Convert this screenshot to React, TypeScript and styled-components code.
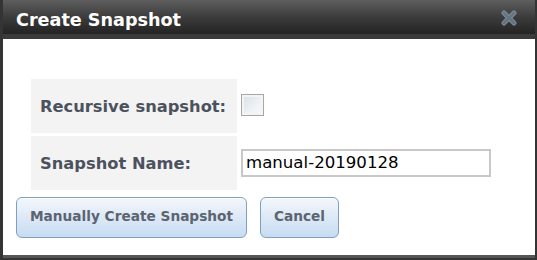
import * as React from 'react';
import styled, { createGlobalStyle } from 'styled-components';

const GlobalStyle = createGlobalStyle`
  html, body {
    margin: 0;
    padding: 0;
    background: #ffffff;
  }
  body {
    font-family: "DejaVu Sans", Verdana, sans-serif;
  }
`;

const DivDialog = styled.div`
  width: 537px;
  height: 260px;
  box-sizing: border-box;
  display: flex;
  flex-direction: column;
  border-left: 3px solid #343434;
  border-right: 2px solid #343434;
  border-bottom: 2px solid #343434;
  box-shadow: inset 0 -3px 0 #555555;
  background: #555555;
`;

const DivTitleBar = styled.div`
  flex: 0 0 34px;
  display: flex;
  flex-direction: row;
  align-items: center;
  padding: 0 18px 0 13px;
  background: linear-gradient(to bottom, #5e5e5e 0%, #3c3c3c 50%, #232323 100%);
  border-bottom: 5px solid #3a3a3a;
`;

const DivTitle = styled.div`
  flex: 1 1 0;
  color: #ffffff;
  font-weight: bold;
  font-size: 17.6px;
  padding-top: 6px;
`;

const DivClose = styled.div`
  width: 16px;
  height: 16px;
  display: flex;
  margin-top: 2px;
  opacity: 0.8;
`;

const DivBody = styled.div`
  flex: 0 0 216px;
  background: #ffffff;
  padding: 40px 0 0 13px;
  box-sizing: border-box;
  display: flex;
  flex-direction: column;
`;

const DivForm = styled.div`
  display: grid;
  grid-template-columns: 206px auto;
  row-gap: 3px;
  margin-left: 15px;
`;

const DivLabel = styled.div`
  height: 54px;
  background: #f3f3f3;
  display: flex;
  align-items: center;
  padding-left: 9px;
  color: #4c525d;
  font-weight: bold;
  font-size: 16.3px;
`;

const DivValue = styled.div`
  display: flex;
  align-items: center;
  padding-left: 4px;
`;

const InputCheck = styled.input`
  appearance: none;
  width: 23px;
  height: 22px;
  margin: 0 0 2px 0;
  border: 1px solid #a7a7a7;
  background: linear-gradient(to bottom right, #d8dfe7 0%, #eef2f6 60%, #f8f9fb 100%);
  box-shadow: inset 0 0 0 2px #f4f4f4;
`;

const InputText = styled.input`
  width: 250px;
  height: 28px;
  box-sizing: border-box;
  margin: 0 0 1px 0;
  border: 2px solid #c8c8c8;
  padding: 0 0 0 3px;
  font-family: "DejaVu Sans", Verdana, sans-serif;
  font-size: 16.6px;
  color: #000000;
  outline: none;
`;

const DivButtons = styled.div`
  display: flex;
  flex-direction: row;
  gap: 13px;
  margin-top: 7px;
`;

const Button = styled.button<{ $width: number }>`
  width: ${props => props.$width}px;
  height: 41px;
  border: 1px solid #7f9fbd;
  border-radius: 6px;
  background: linear-gradient(to bottom, #f3f7fc 0%, #dfeaf7 45%, #c7dcf2 100%);
  box-shadow: inset 0 1px 0 #ffffff;
  color: #5b6470;
  font-family: "DejaVu Sans", Verdana, sans-serif;
  font-weight: bold;
  font-size: 13.7px;
  padding: 0 0 3px 0;
`;

function CloseIcon() {
  return (
    <svg width="16" height="16" viewBox="0 0 16 16">
      <path d="M3 3 L13 13 M13 3 L3 13" stroke="#8a9aa9" strokeWidth="5" strokeLinecap="round" />
      <path d="M3 3 L13 13 M13 3 L3 13" stroke="#6f8396" strokeWidth="2.5" strokeLinecap="round" />
    </svg>
  );
}

export default function App() {
  const [recursive, setRecursive] = React.useState(false);
  const [name, setName] = React.useState('manual-20190128');

  return (
    <>
      <GlobalStyle />
      <DivDialog>
        <DivTitleBar>
          <DivTitle>Create Snapshot</DivTitle>
          <DivClose><CloseIcon /></DivClose>
        </DivTitleBar>
        <DivBody>
          <DivForm>
            <DivLabel>Recursive snapshot:</DivLabel>
            <DivValue>
              <InputCheck type="checkbox" checked={recursive} onChange={e => setRecursive(e.target.checked)} />
            </DivValue>
            <DivLabel>Snapshot Name:</DivLabel>
            <DivValue>
              <InputText value={name} onChange={e => setName(e.target.value)} />
            </DivValue>
          </DivForm>
          <DivButtons>
            <Button $width={231}>Manually Create Snapshot</Button>
            <Button $width={79}>Cancel</Button>
          </DivButtons>
        </DivBody>
      </DivDialog>
    </>
  );
}
